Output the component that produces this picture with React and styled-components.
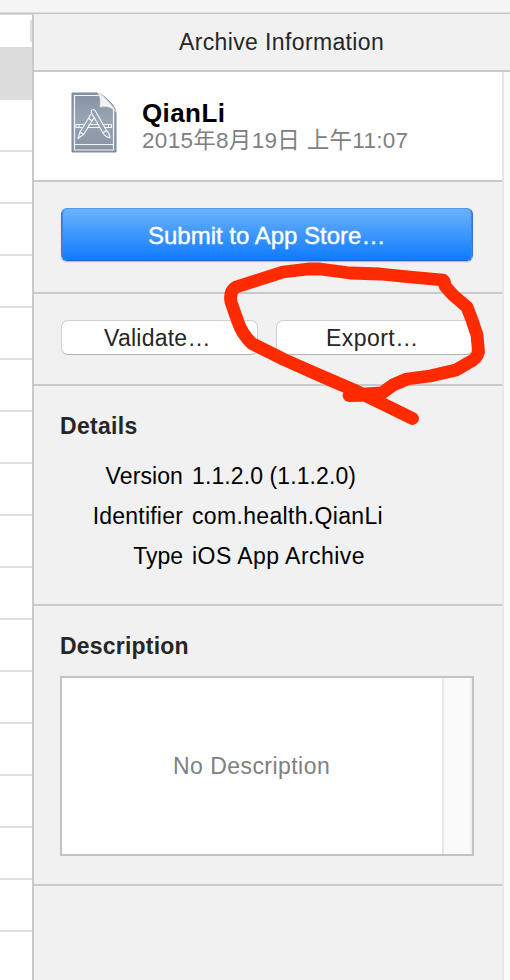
import React from 'react';
import styled, { createGlobalStyle } from 'styled-components';

const Global = createGlobalStyle`
  * { box-sizing: border-box; }
  body { margin: 0; background: #f1f1f1; overflow: hidden; }
`;

const Window = styled.div`
  position: relative;
  width: 510px;
  height: 980px;
  display: flex;
  flex-direction: column;
  overflow: hidden;
  font-family: 'Liberation Sans', 'Noto Sans CJK SC', sans-serif;
  font-size: 23px;
  line-height: 26px;
  color: #000;
`;

const Toolbar = styled.div`
  flex: none;
  height: 14px;
  background: #f5f5f5;
  border-bottom: 1px solid #c6c6c6;
  box-shadow: inset 0 -1px #dedede;
`;

const Body = styled.div`
  flex: 1;
  display: flex;
  min-height: 0;
`;

const ArchiveList = styled.div`
  width: 34px;
  background: #fff;
  border-right: 2px solid #c9c9c9;
  overflow: hidden;
`;

const ListHeader = styled.div`
  height: 33px;
  padding-top: 5px;
  display: flex;
  justify-content: flex-end;
  border-top: 1px solid #dcdcdc;
`;

const ColumnMark = styled.div`
  width: 2px;
  height: 22px;
  background: #e0e0e0;
`;

const ListRow = styled.div`
  height: ${(p) => (p.$selected ? 53 : 52)}px;
  background: ${(p) => (p.$selected ? '#dcdcdc' : '#fff')};
  border-bottom: ${(p) => (p.$selected ? 'none' : '2px solid #e0e0e0')};
`;

const Inspector = styled.div`
  flex: 1;
  display: flex;
  flex-direction: column;
  background: #f1f1f1;
`;

const Title = styled.div`
  height: 58px;
  padding: 15px 0 0 145px;
  border-bottom: 2px solid #c9c9c9;
  color: #262626;
`;

const Scroll = styled.div`
  flex: 1;
  display: flex;
`;

const Content = styled.div`
  width: 468px;
`;

const Track = styled.div`
  flex: 1;
  background: #fafafa;
  border-left: 2px solid #e6e6e6;
`;

const Section = styled.section`
  height: ${(p) => p.$height}px;
  padding: ${(p) => p.$pad || '26px 27px 0'};
  border-bottom: 2px solid #c9c9c9;
`;

const Summary = styled(Section)`
  display: flex;
  background: #fff;
`;

const FileIcon = styled.svg`
  display: block;
  width: 46px;
  height: 62px;
  flex: none;
`;

const SummaryText = styled.div`
  margin-left: 25px;
  padding-top: 8px;
`;

const Label = styled.span`
  display: inline-block;
  white-space: pre;
  font-size: ${(p) => p.$size || 23}px;
  font-weight: ${(p) => (p.$bold ? 700 : 400)};
  letter-spacing: ${(p) => p.$track || 0}px;
  color: ${(p) => p.$color || 'inherit'};
`;

const Line = styled.div`
  height: 27px;
  line-height: 27px;
`;

const Button = styled.button`
  display: block;
  width: ${(p) => p.$width || 198}px;
  height: 35px;
  padding: 0 0 0 ${(p) => p.$inset}px;
  border: 1px solid #cfcfcf;
  border-bottom-color: #b5b5b5;
  border-radius: 7px;
  background: #fff;
  color: #262626;
  font: inherit;
  text-align: left;
`;

const PrimaryButton = styled(Button)`
  width: 412px;
  height: 53px;
  padding-top: 2px;
  border: 1px solid;
  border-color: #4b98ee #3577dc #2163d8 #3577dc;
  border-radius: 6px;
  background: linear-gradient(#6bb3fb, #0f7aff) padding-box;
  color: #fff;
  box-shadow: inset 1px 0 #3f86e6, inset -1px 0 #3f86e6, 0 1px 1px #b0b0dc;
  -webkit-text-stroke: 0.4px #fff;
`;

const ButtonRow = styled.div`
  display: flex;
  gap: 18px;
`;

const Details = styled.dl`
  margin: 24px 0 0;
  display: grid;
  grid-template-columns: 123px 1fr;
  grid-auto-rows: 40px;
  column-gap: 9px;
`;

const Term = styled.dt`
  text-align: right;
`;

const Value = styled.dd`
  margin: 0;
`;

const Heading = styled.h2`
  margin: 0;
  height: 26px;
  font-size: 23px;
  color: #262626;
`;

const DescriptionBox = styled.div`
  margin-top: 17px;
  width: 414px;
  height: 180px;
  display: flex;
  border: 2px solid #c3c3c3;
  background: #fff;
`;

const Placeholder = styled.div`
  flex: 1;
  padding: 75px 0 0 111px;
  color: #808080;
`;

const BoxTrack = styled.div`
  width: 30px;
  background: #fafafa;
  border-left: 2px solid #e6e6e6;
  border-right: 2px solid #f0f0f0;
`;

const Annotation = styled.svg`
  position: absolute;
  left: 0;
  top: 0;
  pointer-events: none;
`;

function ArchiveFileIcon() {
  return (
    <FileIcon viewBox="0 0 46 62">
      <defs>
        <linearGradient id="page" x1="0" y1="0" x2="0" y2="1">
          <stop offset="0" stopColor="#8593a3" />
          <stop offset="0.45" stopColor="#98a4b2" />
          <stop offset="1" stopColor="#8793a3" />
        </linearGradient>
        <linearGradient id="fold" x1="0" y1="1" x2="0.8" y2="0.2">
          <stop offset="0" stopColor="#ffffff" />
          <stop offset="0.6" stopColor="#f3f3f5" />
          <stop offset="1" stopColor="#c5c9ce" />
        </linearGradient>
      </defs>
      <path d="M1 1H26Q31 2 35 6Q42 12 44 17Q45 19 45 22V60H1Z" fill="url(#page)" stroke="#7b899a" />
      <path d="M28 3.5H3.5V58H42.5V17M3.5 52.5H42.5" fill="none" stroke="#f2f4f6" strokeWidth="1.2" />
      <path d="M27 1Q30 5 29 15Q39 13 45 20Q43 15 36 8Q31 2 27 1Z" fill="url(#fold)" stroke="#dcdfe3" strokeWidth=".5" />
      <g fill="none" stroke="#f2f4f6" strokeWidth="1.2" strokeLinejoin="round">
        <path d="M17.5 32.5H27.5M16 35.5H29M13 32.5H5V35.5H11M31.5 32.5H40.5V35.5H33.5M37.5 32.5V35.5M8 32.5V35.5" />
        <path d="M20.2 20.5Q20 17.5 22.5 17.5Q24 17.5 25 20L35.5 38.5Q38.5 41 39 46Q34.5 45 32 41L20.2 20.5M32 41L35.5 38.5" />
        <path d="M20 22L17.5 26L21 29L23.5 25M18 25.5L9 40L7 46.5L12.5 42.5L21 29M9 40L12.5 42.5" />
      </g>
    </FileIcon>
  );
}

const details = [
  { term: 'Version', termTrack: 0.1, value: '1.1.2.0 (1.1.2.0)', track: 0.1 },
  { term: 'Identifier', termTrack: 0.2, value: 'com.health.QianLi', track: 0.33 },
  { term: 'Type', termTrack: 0, value: 'iOS App Archive', track: 0.45 },
];

export default function App() {
  return (
    <Window>
      <Global />
      <Toolbar />
      <Body>
        <ArchiveList>
          <ListHeader><ColumnMark /></ListHeader>
          <ListRow $selected />
          {Array.from({ length: 17 }, (_, i) => <ListRow key={i} />)}
        </ArchiveList>
        <Inspector>
          <Title><Label $track={0.37}>Archive Information</Label></Title>
          <Scroll>
            <Content>
              <Summary $height={110} $pad="20px 0 0 37px">
                <ArchiveFileIcon />
                <SummaryText>
                  <Line><Label $bold $size={26} $track={0.4}>QianLi</Label></Line>
                  <Line><Label $size={22.5} $color="#808080" $track={0.3}>2015年8月19日 上午11:07</Label></Line>
                </SummaryText>
              </Summary>
              <Section $height={112}>
                <PrimaryButton $inset={86}><Label $size={24}>Submit to App Store…</Label></PrimaryButton>
              </Section>
              <Section $height={92}>
                <ButtonRow>
                  <Button $inset={42} $width={197}><Label $track={0.25}>Validate…</Label></Button>
                  <Button $inset={49} $width={197}><Label $track={0.45}>Export…</Label></Button>
                </ButtonRow>
              </Section>
              <Section $height={220} $pad="27px 26px 0">
                <Heading><Label $bold $track={0.3}>Details</Label></Heading>
                <Details>
                  {details.map((d) => (
                    <React.Fragment key={d.term}>
                      <Term><Label $track={d.termTrack}>{d.term}</Label></Term>
                      <Value><Label $track={d.track}>{d.value}</Label></Value>
                    </React.Fragment>
                  ))}
                </Details>
              </Section>
              <Section $height={280} $pad="27px 26px 0">
                <Heading><Label $bold $track={0.2}>Description</Label></Heading>
                <DescriptionBox>
                  <Placeholder><Label $track={0.45}>No Description</Label></Placeholder>
                  <BoxTrack />
                </DescriptionBox>
              </Section>
            </Content>
            <Track />
          </Scroll>
        </Inspector>
      </Body>
      <Annotation width="510" height="980" viewBox="0 0 510 980">
        <path
          d="M412.5 418.5L385 405L356 391L320 375.5L285 360L252 343.5Q242 334 238 322L231 302Q229 291 236 287L258 280L283 272L308 269L320 269L350 273L380 274L410 277L443 280Q445 282 445 286L453 295L467 307L472 320L477 335L478.5 352Q477 359 468 363L456 370L430 376L407 379L393 385L382 393L365 394L349 395.5L375 395"
          fill="none"
          stroke="#ff2a00"
          strokeWidth="12.8"
          strokeLinecap="round"
          strokeLinejoin="round"
        />
      </Annotation>
    </Window>
  );
}
